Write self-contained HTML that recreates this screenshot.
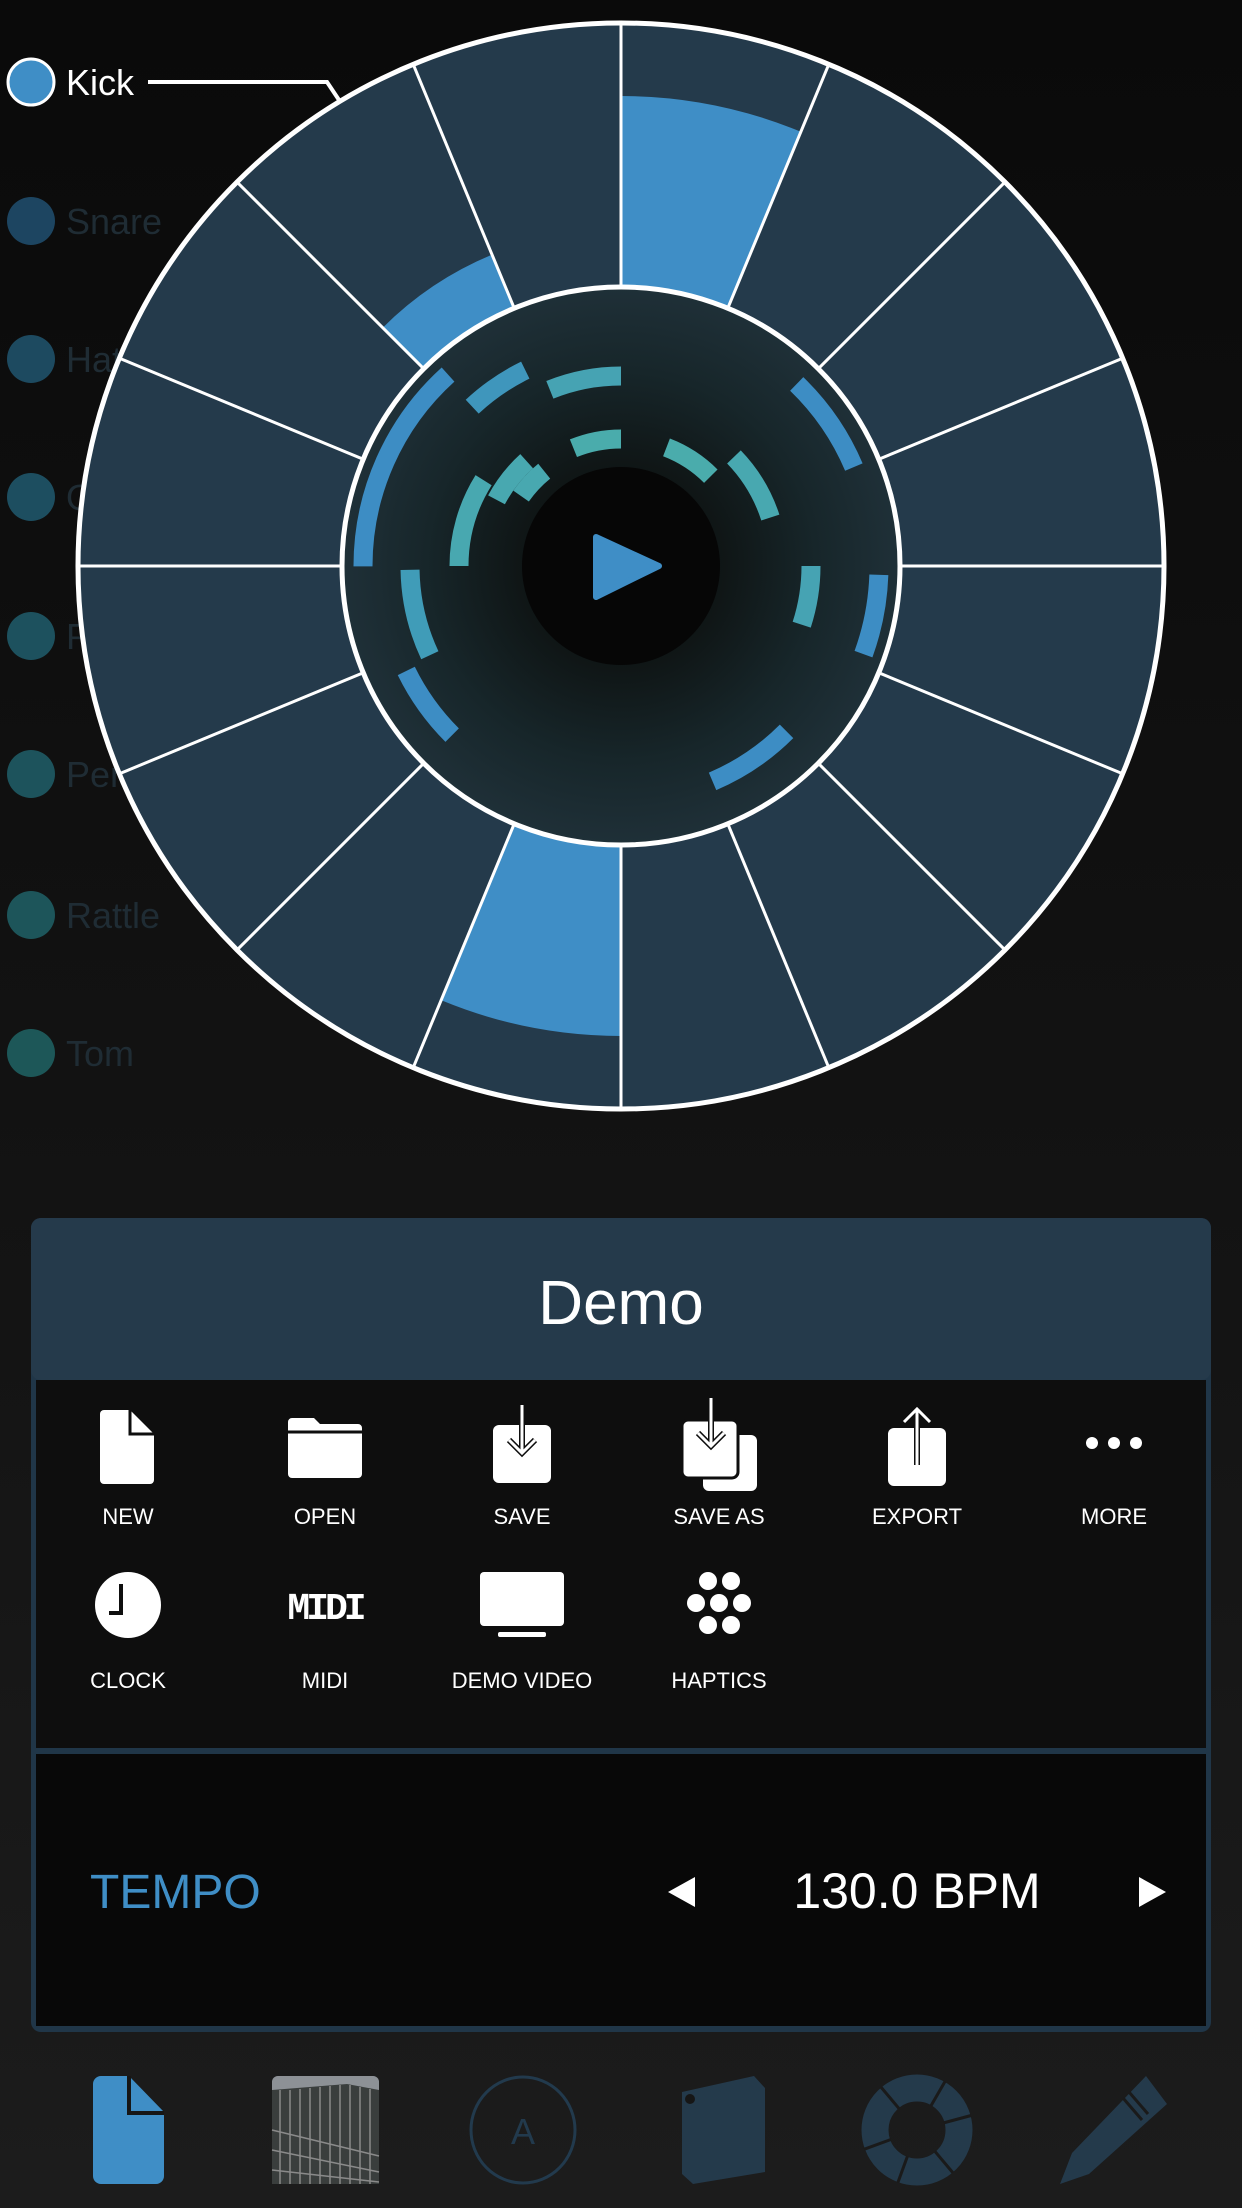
<!DOCTYPE html>
<html><head><meta charset="utf-8"><style>
html,body{margin:0;padding:0;}
body{width:1242px;height:2208px;overflow:hidden;background:linear-gradient(#0a0a0a,#141414 60%,#1c1c1c);font-family:"Liberation Sans",sans-serif;}
svg{position:absolute;left:0;top:0}
</style></head><body>
<svg width="1242" height="2208" viewBox="0 0 1242 2208" xmlns="http://www.w3.org/2000/svg" font-family="Liberation Sans, sans-serif">
<defs>
<radialGradient id="inner" cx="621" cy="566" r="279" gradientUnits="userSpaceOnUse">
<stop offset="0.35" stop-color="#0f1515"/><stop offset="0.7" stop-color="#17262a"/><stop offset="1" stop-color="#1f3038"/>
</radialGradient>
</defs>
<g font-size="36">
<circle cx="31" cy="82" r="23" fill="#3f8ec6" stroke="#fff" stroke-width="3"/>
<text x="66" y="95" fill="#fff">Kick</text>
<polyline points="148,82 327,82 341,103" fill="none" stroke="#fff" stroke-width="4"/>
<circle cx="31" cy="221" r="24" fill="#1d4561"/><text x="66" y="234" fill="#1f2c34">Snare</text>
<circle cx="31" cy="359" r="24" fill="#1d4a60"/><text x="66" y="372" fill="#1f2c34">Hat</text>
<circle cx="31" cy="497" r="24" fill="#1d4e60"/><text x="66" y="510" fill="#1f2c34">OHH</text>
<circle cx="31" cy="636" r="24" fill="#1d515e"/><text x="66" y="649" fill="#1f2c34">Perc</text>
<circle cx="31" cy="774" r="24" fill="#1d535c"/><text x="66" y="787" fill="#1f2c34">Perc</text>
<circle cx="31" cy="915" r="24" fill="#1d555a"/><text x="66" y="928" fill="#1f2c34">Rattle</text>
<circle cx="31" cy="1053" r="24" fill="#1d5758"/><text x="66" y="1066" fill="#1f2c34">Tom</text>
</g>
<circle cx="621" cy="566" r="543" fill="#243a4b"/>
<g fill="none" stroke="#3f8ec6" transform="rotate(-90 621 566)">
<circle cx="621" cy="566" r="374.5" stroke-width="191" pathLength="360" stroke-dasharray="22.5 337.5"/>
<circle cx="621" cy="566" r="374.5" stroke-width="191" pathLength="360" stroke-dasharray="22.5 337.5" stroke-dashoffset="-180"/>
<circle cx="621" cy="566" r="308" stroke-width="58" pathLength="360" stroke-dasharray="22.5 337.5" stroke-dashoffset="-315"/>
</g>
<g stroke="#fff" stroke-width="3">
<line x1="621" y1="23" x2="621" y2="1109"/>
<line x1="78" y1="566" x2="1164" y2="566"/>
<g transform="rotate(22.5 621 566)"><line x1="621" y1="23" x2="621" y2="1109"/><line x1="78" y1="566" x2="1164" y2="566"/></g>
<g transform="rotate(45 621 566)"><line x1="621" y1="23" x2="621" y2="1109"/><line x1="78" y1="566" x2="1164" y2="566"/></g>
<g transform="rotate(67.5 621 566)"><line x1="621" y1="23" x2="621" y2="1109"/><line x1="78" y1="566" x2="1164" y2="566"/></g>
</g>
<circle cx="621" cy="566" r="543" fill="none" stroke="#fff" stroke-width="5"/>
<circle cx="621" cy="566" r="279" fill="url(#inner)" stroke="#fff" stroke-width="5"/>
<circle cx="621" cy="566" r="99" fill="#060606"/>
<g fill="none" stroke-width="19" transform="rotate(-90 621 566)">
<circle cx="621" cy="566" r="258" stroke="#3d8dc4" pathLength="360" stroke-dasharray="48 312" stroke-dashoffset="-270"/>
<circle cx="621" cy="566" r="258" stroke="#3d8dc4" pathLength="360" stroke-dasharray="18 342" stroke-dashoffset="-92"/>
<circle cx="621" cy="566" r="253" stroke="#3d8dc4" pathLength="360" stroke-dasharray="23 337" stroke-dashoffset="-44"/>
<circle cx="621" cy="566" r="234" stroke="#3d8dc4" pathLength="360" stroke-dasharray="22 338" stroke-dashoffset="-135"/>
<circle cx="621" cy="566" r="239" stroke="#3d8dc4" pathLength="360" stroke-dasharray="19 341" stroke-dashoffset="-225"/>
<circle cx="621" cy="566" r="218" stroke="#3f96bc" pathLength="360" stroke-dasharray="17 343" stroke-dashoffset="-317"/>
<circle cx="621" cy="566" r="211" stroke="#409cb8" pathLength="360" stroke-dasharray="24 336" stroke-dashoffset="-245"/>
<circle cx="621" cy="566" r="190" stroke="#46a3b3" pathLength="360" stroke-dasharray="22 338" stroke-dashoffset="-338"/>
<circle cx="621" cy="566" r="190" stroke="#46a3b3" pathLength="360" stroke-dasharray="18 342" stroke-dashoffset="-90"/>
<circle cx="621" cy="566" r="162" stroke="#48a8b0" pathLength="360" stroke-dasharray="32 328" stroke-dashoffset="-270"/>
<circle cx="621" cy="566" r="157" stroke="#48a8b0" pathLength="360" stroke-dasharray="26 334" stroke-dashoffset="-46"/>
<circle cx="621" cy="566" r="141" stroke="#48a8b0" pathLength="360" stroke-dasharray="20 340" stroke-dashoffset="-298"/>
<circle cx="621" cy="566" r="122" stroke="#48a8b0" pathLength="360" stroke-dasharray="16 344" stroke-dashoffset="-305"/>
<circle cx="621" cy="566" r="127" stroke="#4aacac" pathLength="360" stroke-dasharray="22 338" stroke-dashoffset="-338"/>
<circle cx="621" cy="566" r="127" stroke="#4aacac" pathLength="360" stroke-dasharray="24 336" stroke-dashoffset="-21"/>
</g>
<path d="M596 537 L659 566 L596 597 Z" fill="#3f8ec6" stroke="#3f8ec6" stroke-width="6" stroke-linejoin="round"/>
<rect x="31" y="1218" width="1180" height="814" rx="10" fill="#203648"/>
<rect x="31" y="1218" width="1180" height="162" rx="10" fill="#253a4b"/>
<rect x="36" y="1380" width="1170" height="368" fill="#0e0e0e"/>
<rect x="36" y="1754" width="1170" height="272" fill="#080808"/>
<text x="621" y="1324" fill="#fff" font-size="62" text-anchor="middle">Demo</text>
<g fill="#fff" font-size="22" text-anchor="middle">
<text x="128" y="1524">NEW</text><text x="325" y="1524">OPEN</text><text x="522" y="1524">SAVE</text>
<text x="719" y="1524">SAVE AS</text><text x="917" y="1524">EXPORT</text><text x="1114" y="1524">MORE</text>
<text x="128" y="1688">CLOCK</text><text x="325" y="1688">MIDI</text><text x="522" y="1688">DEMO VIDEO</text><text x="719" y="1688">HAPTICS</text>
</g>
<path d="M104 1410 h26 l24 24 v46 a4 4 0 0 1 -4 4 h-46 a4 4 0 0 1 -4 -4 v-66 a4 4 0 0 1 4 -4z" fill="#fff"/>
<path d="M130 1410 v24 h24" fill="none" stroke="#0e0e0e" stroke-width="3"/>
<path d="M288 1418 h26 l6 6 h38 a4 4 0 0 1 4 4 v46 a4 4 0 0 1 -4 4 h-66 a4 4 0 0 1 -4 -4 v-52 a4 4 0 0 1 4 -4z" fill="#fff"/>
<line x1="286" y1="1432" x2="362" y2="1432" stroke="#0e0e0e" stroke-width="3"/>
<rect x="493" y="1425" width="58" height="58" rx="6" fill="#fff"/>
<path d="M522 1405 v48 M509 1440 l13 13 l13 -13" fill="none" stroke="#0e0e0e" stroke-width="6"/>
<path d="M522 1405 v48 M509 1440 l13 13 l13 -13" fill="none" stroke="#fff" stroke-width="3"/>
<rect x="703" y="1435" width="54" height="56" rx="6" fill="#fff"/>
<rect x="682" y="1420" width="56" height="58" rx="6" fill="#fff" stroke="#0e0e0e" stroke-width="3"/>
<path d="M711 1398 v48 M698 1433 l13 13 l13 -13" fill="none" stroke="#0e0e0e" stroke-width="6"/>
<path d="M711 1398 v48 M698 1433 l13 13 l13 -13" fill="none" stroke="#fff" stroke-width="3"/>
<rect x="888" y="1428" width="58" height="58" rx="6" fill="#fff"/>
<path d="M917 1465 v-56 M904 1422 l13 -13 l13 13" fill="none" stroke="#0e0e0e" stroke-width="6"/>
<path d="M917 1465 v-56 M904 1422 l13 -13 l13 13" fill="none" stroke="#fff" stroke-width="3"/>
<circle cx="1092" cy="1443" r="6" fill="#fff"/><circle cx="1114" cy="1443" r="6" fill="#fff"/><circle cx="1136" cy="1443" r="6" fill="#fff"/>
<circle cx="128" cy="1605" r="33" fill="#fff"/>
<path d="M121 1584 v29 h-12" fill="none" stroke="#0e0e0e" stroke-width="4"/>
<text x="325" y="1619" fill="#fff" font-size="38" font-weight="bold" text-anchor="middle" font-family="Liberation Mono, monospace" letter-spacing="-4">MIDI</text>
<rect x="480" y="1572" width="84" height="54" rx="4" fill="#fff"/>
<rect x="498" y="1632" width="48" height="5" rx="2" fill="#fff"/>
<g fill="#fff"><circle cx="708" cy="1581" r="9"/><circle cx="731" cy="1581" r="9"/><circle cx="696" cy="1603" r="9"/><circle cx="719" cy="1603" r="9"/><circle cx="742" cy="1603" r="9"/><circle cx="708" cy="1625" r="9"/><circle cx="731" cy="1625" r="9"/></g>
<text x="90" y="1908" fill="#3f8ec6" font-size="48">TEMPO</text>
<path d="M668 1892 l27 -15 v30z" fill="#fff"/>
<text x="917" y="1908" fill="#fff" font-size="50" text-anchor="middle">130.0 BPM</text>
<path d="M1166 1892 l-27 -15 v30z" fill="#fff"/>
<path d="M101 2076 h28 l35 36 v64 a8 8 0 0 1 -8 8 h-55 a8 8 0 0 1 -8 -8 v-92 a8 8 0 0 1 8 -8z" fill="#3f8ec6"/>
<path d="M129 2076 v37 h35" fill="none" stroke="#161616" stroke-width="4"/>
<rect x="272" y="2076" width="107" height="108" rx="6" fill="#4a4c4f"/>
<rect x="272" y="2076" width="107" height="24" rx="6" fill="#8d9196"/>
<path d="M272 2090 l75 -6 l32 6 v94 h-107z" fill="#3a3e3d"/>
<g stroke="#8a8a8a" stroke-width="1.5">
<path d="M280 2090 v94 M290 2090 v94 M300 2089 v95 M310 2088 v96 M320 2087 v97 M330 2086 v98 M340 2085 v99 M350 2085 v99 M360 2087 v97 M370 2089 v95"/>
<path d="M272 2130 l107 26 M272 2150 l107 22 M272 2170 l107 12"/>
</g>
<ellipse cx="523" cy="2130" rx="52" ry="53" fill="none" stroke="#223a4d" stroke-width="3"/>
<text x="523" y="2144" fill="#223a4d" font-size="36" text-anchor="middle">A</text>
<path d="M682 2092 l72 -16 l11 12 v84 l-72 12 l-11 -10z" fill="#243a4b"/>
<circle cx="690" cy="2099" r="5" fill="#161616"/>
<circle cx="917" cy="2130" r="42" fill="none" stroke="#243a4b" stroke-width="27"/>
<g stroke="#1a1a1a" stroke-width="3">
<line x1="917" y1="2074" x2="917" y2="2102" transform="rotate(30 917 2130)"/>
<line x1="917" y1="2074" x2="917" y2="2102" transform="rotate(75 917 2130)"/>
<line x1="917" y1="2074" x2="917" y2="2102" transform="rotate(140 917 2130)"/>
<line x1="917" y1="2074" x2="917" y2="2102" transform="rotate(200 917 2130)"/>
<line x1="917" y1="2074" x2="917" y2="2102" transform="rotate(250 917 2130)"/>
<line x1="917" y1="2074" x2="917" y2="2102" transform="rotate(320 917 2130)"/>
</g>
<path d="M1146 2076 l21 28 l-78 70 l-29 10 l12 -31z" fill="#243a4b"/>
<path d="M1129 2092 l19 22 M1123 2098 l19 22" stroke="#1a1a1a" stroke-width="3"/>
</svg>
</body></html>
